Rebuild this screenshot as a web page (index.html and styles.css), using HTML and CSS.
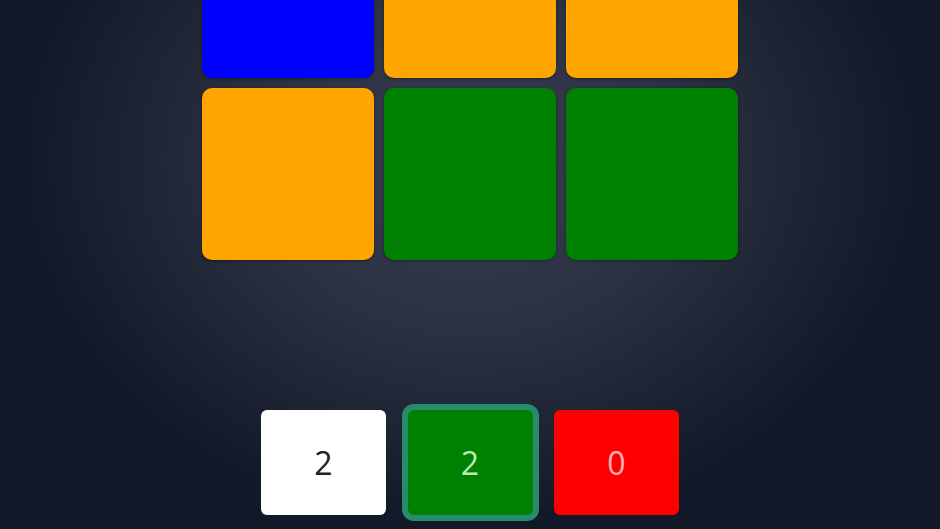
FILE: index.html
```html
<!DOCTYPE html>
<html lang="en">
<head>
<meta charset="utf-8">
<title>Color grid</title>
<link rel="stylesheet" href="styles.css">
</head>
<body>
<main class="stage">
  <section class="board">
    <div class="tile tile-blue"></div>
    <div class="tile tile-orange"></div>
    <div class="tile tile-orange"></div>
    <div class="tile tile-orange"></div>
    <div class="tile tile-green"></div>
    <div class="tile tile-green"></div>
  </section>
  <nav class="choices">
    <button class="choice choice-white">2</button>
    <button class="choice choice-green is-selected">2</button>
    <button class="choice choice-red">0</button>
  </nav>
</main>
</body>
</html>
```
FILE: styles.css
```css
html, body {
  margin: 0;
  padding: 0;
  height: 100%;
}
body {
  background: #111827 radial-gradient(ellipse 450px 370px at 50% 30%, #383e50 0%, #2c3243 45%, #111827 100%);
  font-family: "Open Sans", "Noto Sans", sans-serif;
  overflow: hidden;
}
.stage {
  height: 100vh;
  display: flex;
  flex-direction: column;
  justify-content: flex-end;
  align-items: center;
  padding-bottom: 14px;
  box-sizing: border-box;
  overflow: hidden;
}
.board {
  display: grid;
  grid-template-columns: repeat(3, 172px);
  grid-auto-rows: 172px;
  gap: 10px;
  flex-shrink: 0;
  margin-bottom: 150px;
}
.tile {
  border-radius: 10px;
  box-shadow: 0 1px 3px rgba(0, 0, 0, 0.35);
}
.tile-blue { background: #0000ff; }
.tile-orange { background: #ffa500; }
.tile-green { background: #008000; }
.choices {
  display: flex;
  gap: 21.5px;
  flex-shrink: 0;
}
.choice {
  width: 125px;
  height: 105px;
  border: none;
  border-radius: 6px;
  font-family: "Open Sans", "Noto Sans", sans-serif;
  font-size: 32px;
  line-height: 1;
  padding: 0;
  display: flex;
  align-items: center;
  justify-content: center;
}
.choice-white { background: #ffffff; color: #222222; }
.choice-green { background: #008000; color: rgba(220, 255, 220, 0.85); }
.choice-red { background: #ff0000; color: rgba(255, 225, 225, 0.8); }
.is-selected {
  box-shadow: 0 0 0 6px #288c6c;
  border-radius: 6px;
}
```
